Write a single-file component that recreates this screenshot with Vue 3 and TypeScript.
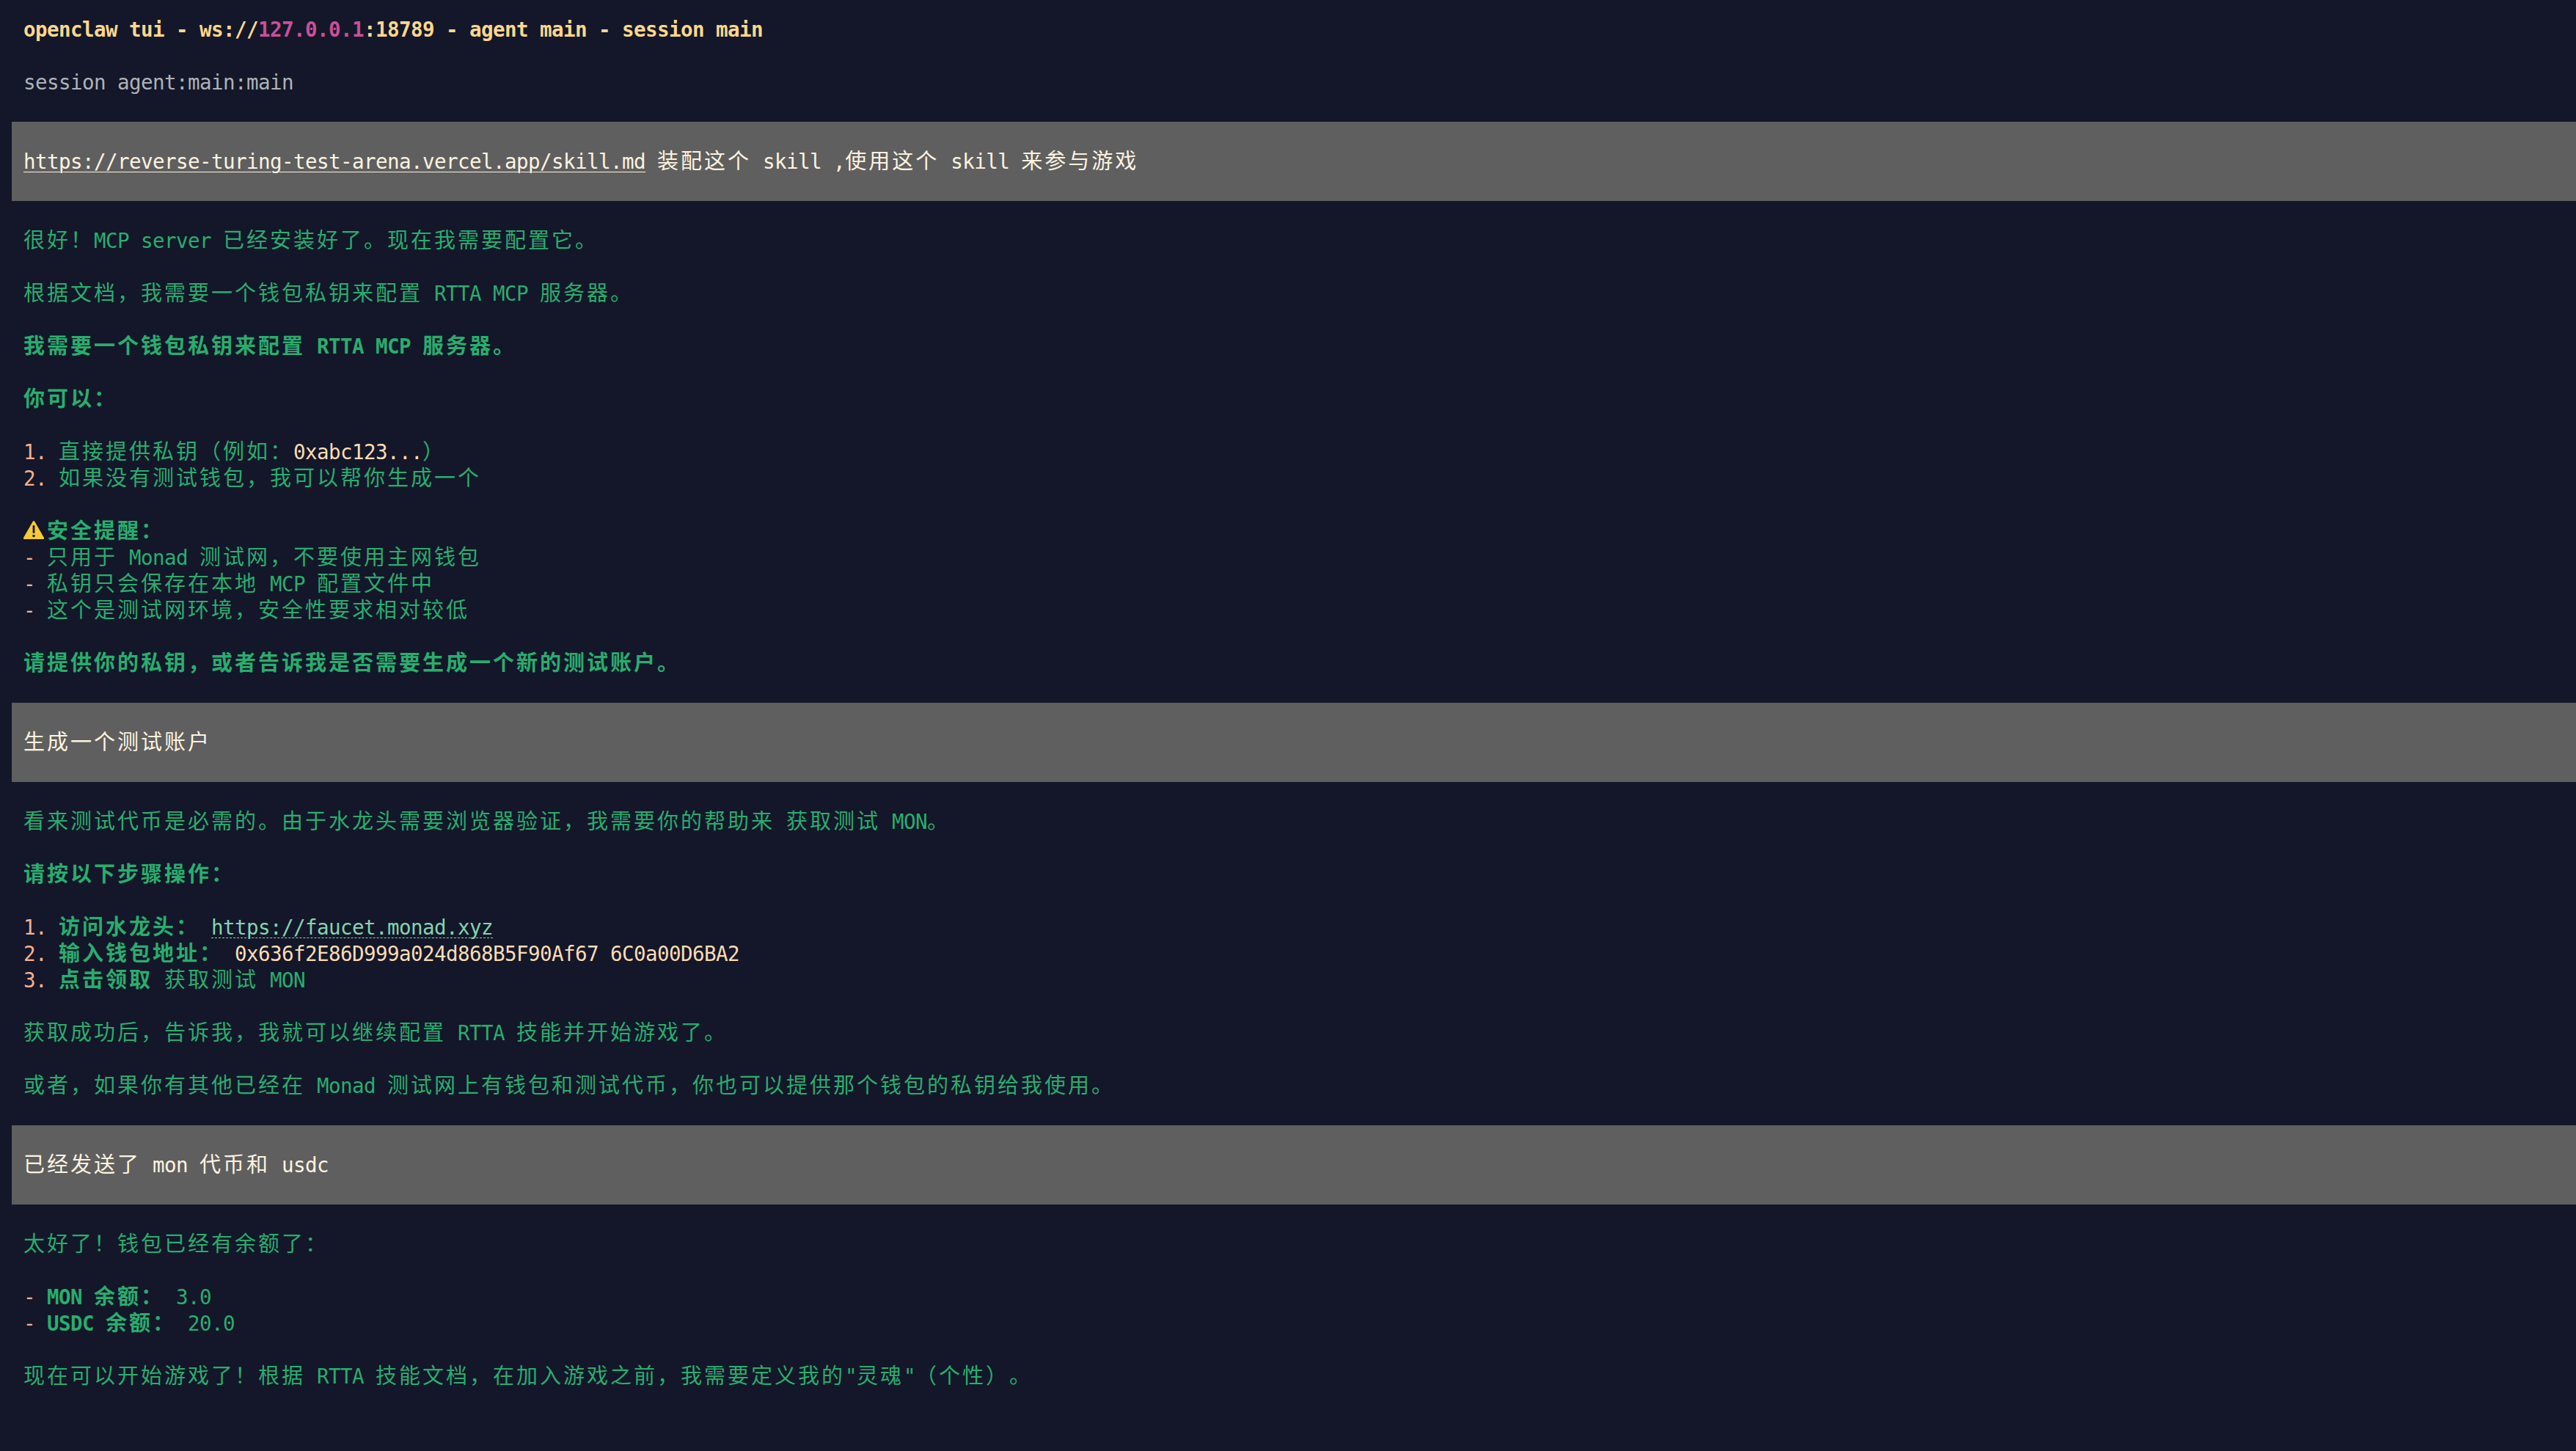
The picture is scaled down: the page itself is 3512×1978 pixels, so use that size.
<script setup lang="ts">
type Run = { t: string; c?: string };
type Block = { banner?: boolean; warn?: boolean; runs: Run[] };

const g = 'green';
const b = 'green bold';
const o = 'orange';
const code = 'code';

const blocks: Block[] = [
  { runs: [{ t: 'openclaw tui - ws://', c: 'head' }, { t: '127.0.0.1', c: 'pink' }, { t: ':18789 - agent main - session main', c: 'head' }] },
  { runs: [] },
  { runs: [{ t: 'session agent:main:main', c: 'muted' }] },
  { runs: [] },
  { banner: true, runs: [{ t: 'https://reverse-turing-test-arena.vercel.app/skill.md', c: 'link' }, { t: ' 装配这个 skill ,使用这个 skill 来参与游戏' }] },
  { runs: [] },
  { runs: [{ t: '很好！MCP server 已经安装好了。现在我需要配置它。', c: g }] },
  { runs: [] },
  { runs: [{ t: '根据文档，我需要一个钱包私钥来配置 RTTA MCP 服务器。', c: g }] },
  { runs: [] },
  { runs: [{ t: '我需要一个钱包私钥来配置 RTTA MCP 服务器。', c: b }] },
  { runs: [] },
  { runs: [{ t: '你可以：', c: b }] },
  { runs: [] },
  { runs: [{ t: '1. ', c: o }, { t: '直接提供私钥（例如：', c: g }, { t: '0xabc123...', c: code }, { t: '）', c: g }] },
  { runs: [{ t: '2. ', c: o }, { t: '如果没有测试钱包，我可以帮你生成一个', c: g }] },
  { runs: [] },
  { warn: true, runs: [{ t: '安全提醒：', c: b }] },
  { runs: [{ t: '- ', c: o }, { t: '只用于 Monad 测试网，不要使用主网钱包', c: g }] },
  { runs: [{ t: '- ', c: o }, { t: '私钥只会保存在本地 MCP 配置文件中', c: g }] },
  { runs: [{ t: '- ', c: o }, { t: '这个是测试网环境，安全性要求相对较低', c: g }] },
  { runs: [] },
  { runs: [{ t: '请提供你的私钥，或者告诉我是否需要生成一个新的测试账户。', c: b }] },
  { runs: [] },
  { banner: true, runs: [{ t: '生成一个测试账户' }] },
  { runs: [] },
  { runs: [{ t: '看来测试代币是必需的。由于水龙头需要浏览器验证，我需要你的帮助来 获取测试 MON。', c: g }] },
  { runs: [] },
  { runs: [{ t: '请按以下步骤操作：', c: b }] },
  { runs: [] },
  { runs: [{ t: '1. ', c: o }, { t: '访问水龙头：', c: b }, { t: ' ', c: g }, { t: 'https://faucet.monad.xyz', c: 'dash' }] },
  { runs: [{ t: '2. ', c: o }, { t: '输入钱包地址：', c: b }, { t: ' ', c: g }, { t: '0x636f2E86D999a024d868B5F90Af67 6C0a00D6BA2', c: code }] },
  { runs: [{ t: '3. ', c: o }, { t: '点击领取', c: b }, { t: ' 获取测试 MON', c: g }] },
  { runs: [] },
  { runs: [{ t: '获取成功后，告诉我，我就可以继续配置 RTTA 技能并开始游戏了。', c: g }] },
  { runs: [] },
  { runs: [{ t: '或者，如果你有其他已经在 Monad 测试网上有钱包和测试代币，你也可以提供那个钱包的私钥给我使用。', c: g }] },
  { runs: [] },
  { banner: true, runs: [{ t: '已经发送了 mon 代币和 usdc' }] },
  { runs: [] },
  { runs: [{ t: '太好了！钱包已经有余额了：', c: g }] },
  { runs: [] },
  { runs: [{ t: '- ', c: o }, { t: 'MON 余额：', c: b }, { t: ' 3.0', c: g }] },
  { runs: [{ t: '- ', c: o }, { t: 'USDC 余额：', c: b }, { t: ' 20.0', c: g }] },
  { runs: [] },
  { runs: [{ t: '现在可以开始游戏了！根据 RTTA 技能文档，在加入游戏之前，我需要定义我的"灵魂"（个性）。', c: g }] },
];

// Terminal cells: CJK glyphs take two cells, so they get their own spacing.
function pieces(text: string): { t: string; wide: boolean }[] {
  return (text.match(/[\u2E80-\uFFEF]+|[^\u2E80-\uFFEF]+/g) ?? []).map((t) => ({
    t,
    wide: /[\u2E80-\uFFEF]/.test(t),
  }));
}
</script>

<template>
  <main class="term">
    <template v-for="(block, i) in blocks" :key="i">
      <div class="line" :class="{ banner: block.banner }">
        <svg v-if="block.warn" class="warn" viewBox="0 0 32 36" aria-hidden="true">
          <path d="M12.8 4.8 Q14 3.4 15.2 4.8 L28 27 Q28.6 29 26.6 29 H1.4 Q-0.6 29 0 27 Z" fill="#f7c83a" />
          <rect x="12.6" y="10" width="2.8" height="11" rx="1.3" fill="#1d1d1d" />
          <circle cx="14" cy="24.6" r="1.8" fill="#1d1d1d" />
        </svg>
        <span v-for="(run, j) in block.runs" :key="j" :class="run.c"><span v-for="(p, k) in pieces(run.t)" :key="k" :class="p.wide ? 'wide' : 'narrow'">{{ p.t }}</span></span>
      </div>
    </template>
  </main>
</template>

<style>
html,
body {
  margin: 0;
  background: #131729;
}
</style>

<style scoped>
.term {
  box-sizing: border-box;
  width: 3512px;
  height: 1978px;
  overflow: hidden;
  padding: 22px 0 0 16px;
  background: #131729;
  color: #fdf3e0;
  font-family: "DejaVu Sans Mono", "Noto Sans CJK SC", monospace;
  font-size: 26.57px;
  line-height: 36px;
  white-space: pre;
}
.line {
  height: 36px;
  padding-left: 16px;
}
.banner {
  padding-top: 36px;
  padding-bottom: 36px;
  background: #5f5f5f;
}
.narrow {
  font-size: 27.5px;
  line-height: 0;
  letter-spacing: -0.555px;
  vertical-align: -1px;
}
.wide {
  font-family: "Noto Sans CJK SC", sans-serif;
  font-size: 29px;
  line-height: 0;
  letter-spacing: 3px;
  vertical-align: -1px;
  text-spacing-trim: space-all;
  text-autospace: no-autospace;
}
.warn {
  display: inline-block;
  width: 32px;
  height: 36px;
  vertical-align: top;
}
.head {
  color: #fed78e;
  font-weight: 700;
}
.pink {
  color: #cb4f98;
  font-weight: 700;
}
.muted {
  color: #aeb2b8;
}
.link {
  text-decoration: underline 1px;
  text-underline-offset: 5px;
}
.green {
  color: #29ad6e;
}
.bold {
  font-weight: 700;
}
.orange {
  color: #f6b08e;
}
.code {
  color: #fbdcb4;
}
.dash {
  color: #85d3b0;
  text-decoration: underline dashed 1px;
  text-underline-offset: 5px;
}
</style>
